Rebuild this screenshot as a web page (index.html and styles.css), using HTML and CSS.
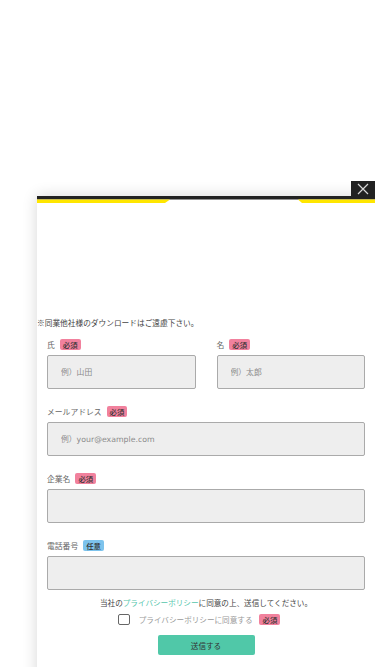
FILE: index.html
```html
<!DOCTYPE html>
<html lang="ja">
<head>
    <meta charset="UTF-8">
    <meta name="viewport" content="width=device-width, initial-scale=1.0">
    <title>資料ダウンロード</title>
    <link rel="stylesheet" href="styles.css">
</head>
<body>
    <div class="modal">
        <button class="close-btn" aria-label="閉じる">
            <svg width="12" height="12" viewBox="0 0 12 12">
                <path d="M1 1L11 11M11 1L1 11" stroke="#d8d8d8" stroke-width="1.2" fill="none"/>
            </svg>
        </button>
        <div class="modal-head">
            <svg class="head-line" viewBox="0 0 338 7" preserveAspectRatio="none">
                <rect x="0" y="0" width="338" height="3.5" fill="#222"/>
                <polygon points="0,3.5 133,3.5 128,7 0,7" fill="#ffe600"/>
                <polygon points="261,3.5 338,3.5 338,7 265,7" fill="#ffe600"/>
            </svg>
        </div>
        <div class="modal-visual"></div>
        <p class="notice">※同業他社様のダウンロードはご遠慮下さい。</p>

        <form class="dl-form">
            <div class="row">
                <div class="field">
                    <div class="label">氏 <span class="badge req">必須</span></div>
                    <input class="input" type="text" placeholder="例）山田">
                </div>
                <div class="field">
                    <div class="label">名 <span class="badge req">必須</span></div>
                    <input class="input" type="text" placeholder="例）太郎">
                </div>
            </div>
            <div class="field">
                <div class="label">メールアドレス <span class="badge req">必須</span></div>
                <input class="input" type="email" placeholder="例）your@example.com">
            </div>
            <div class="field">
                <div class="label">企業名 <span class="badge req">必須</span></div>
                <input class="input" type="text">
            </div>
            <div class="field">
                <div class="label">電話番号 <span class="badge opt">任意</span></div>
                <input class="input" type="tel">
            </div>

            <p class="agree">当社の<a href="#">プライバシーポリシー</a>に同意の上、送信してください。</p>
            <label class="check">
                <input type="checkbox">
                <span class="check-text">プライバシーポリシーに同意する</span>
                <span class="badge req">必須</span>
            </label>
            <div class="submit-wrap">
                <button class="submit" type="button">送信する</button>
            </div>
        </form>
    </div>
</body>
</html>
```

FILE: styles.css
```css
body {
    margin: 0;
    background: #fff;
    font-family: "Noto Sans CJK JP", "Noto Sans", sans-serif;
    color: #555;
    overflow: hidden;
}
.modal {
    position: relative;
    margin: 196px 0 0 37px;
    width: 338px;
    background: #fff;
    box-shadow: 0 0 14px rgba(0, 0, 0, 0.16);
    padding-bottom: 30px;
}
.close-btn {
    position: absolute;
    top: -15px;
    right: 0;
    width: 24px;
    height: 16px;
    padding: 0;
    border: none;
    background: #222;
    display: flex;
    align-items: center;
    justify-content: center;
    cursor: pointer;
}
.modal-head {
    height: 7px;
}
.head-line {
    display: block;
    width: 100%;
    height: 7px;
}
.modal-visual {
    height: 114px;
}
.notice {
    margin: 0;
    font-size: 7.7px;
    line-height: 12px;
    color: #444;
}
.dl-form {
    padding: 10px 10px 0;
}
.row {
    display: flex;
    gap: 21px;
}
.row .field {
    flex: 1;
}
.field {
    margin-bottom: 17px;
}
.label {
    display: flex;
    align-items: center;
    gap: 5px;
    height: 11px;
    font-size: 7.8px;
    color: #666;
    margin-bottom: 5px;
}
.badge {
    display: inline-block;
    font-size: 7.4px;
    font-weight: 500;
    line-height: 11px;
    height: 11px;
    padding: 0 3px;
    border-radius: 2px;
    color: #333;
}
.badge.req {
    background: #f1819d;
}
.badge.opt {
    background: #7dc3ec;
}
.input {
    display: block;
    box-sizing: border-box;
    width: 100%;
    height: 34px;
    margin: 0;
    padding: 0 13px;
    background: #eee;
    border: 1px solid #aaa;
    border-radius: 2px;
    font-family: "DejaVu Sans", "Noto Sans CJK JP", sans-serif;
    font-size: 7.8px;
    color: #555;
}
.input::placeholder {
    color: #8a8a8a;
}
.agree {
    margin: -10px 0 0;
    text-align: center;
    font-size: 7.6px;
    line-height: 12px;
    color: #444;
}
.agree a {
    color: #55c6ac;
    text-decoration: none;
}
.check {
    display: flex;
    align-items: center;
    justify-content: center;
    height: 15px;
    margin: 3px 14px 0 0;
    font-size: 7.6px;
    color: #999;
}
.check input {
    appearance: none;
    width: 12px;
    height: 11px;
    margin: 0 9px 0 0;
    border: 1px solid #666;
    border-radius: 2px;
    background: #fff;
}
.check-text {
    margin-right: 7px;
}
.submit-wrap {
    display: flex;
    justify-content: center;
    margin-top: 8px;
}
.submit {
    width: 97px;
    height: 20px;
    border: none;
    border-radius: 2px;
    background: #50c8a8;
    color: #333;
    font-family: inherit;
    font-size: 7.6px;
    cursor: pointer;
}
```
